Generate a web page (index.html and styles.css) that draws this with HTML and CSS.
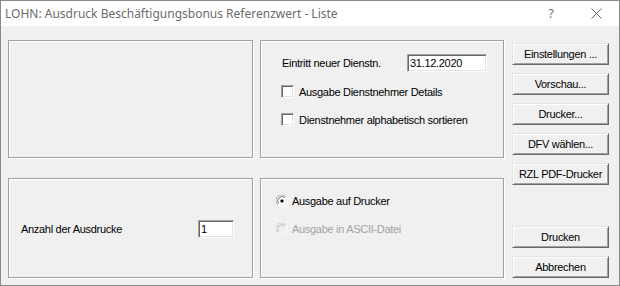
FILE: index.html
```html
<!DOCTYPE html>
<html lang="de">
<head>
  <meta charset="UTF-8">
  <title>LOHN: Ausdruck Beschäftigungsbonus Referenzwert - Liste</title>
  <link rel="stylesheet" href="styles.css">
</head>
<body>
  <div class="window">
    <div class="titlebar">
      <span class="title">LOHN: Ausdruck Beschäftigungsbonus Referenzwert - Liste</span>
      <span class="help">?</span>
      <span class="close">
        <svg width="11" height="11" viewBox="0 0 11 11">
          <path d="M0.5 0.5 L10.5 10.5 M10.5 0.5 L0.5 10.5" stroke="#6a6a6a" stroke-width="1" fill="none"/>
        </svg>
      </span>
    </div>

    <div class="client">
      <div class="col col-left">
        <div class="group group-top"></div>
        <div class="group group-bottom copies">
          <label for="copies">Anzahl der Ausdrucke</label>
          <input class="edit edit-copies" id="copies" type="text" value="1">
        </div>
      </div>

      <div class="col col-mid">
        <div class="group group-top options">
          <div class="field">
            <label for="date">Eintritt neuer Dienstn.</label>
            <input class="edit edit-date" id="date" type="text" value="31.12.2020">
          </div>
          <label class="check check-first">
            <span class="box"></span>
            Ausgabe Dienstnehmer Details
          </label>
          <label class="check">
            <span class="box"></span>
            Dienstnehmer alphabetisch sortieren
          </label>
        </div>

        <div class="group group-bottom output">
          <label class="radio">
            <svg width="12" height="12" viewBox="0 0 12 12">
              <circle cx="6" cy="6" r="5.5" fill="#fff"/>
              <path d="M1.5 9.5 A5.5 5.5 0 0 1 9.5 1.5" stroke="#a0a0a0" fill="none"/>
              <path d="M2.5 8.5 A4.3 4.3 0 0 1 8.5 2.5" stroke="#696969" fill="none"/>
              <path d="M10.5 2.5 A5.5 5.5 0 0 1 2.5 10.5" stroke="#fff" fill="none"/>
              <path d="M9.5 3.5 A4.3 4.3 0 0 1 3.5 9.5" stroke="#e3e3e3" fill="none"/>
              <rect x="4.5" y="4.5" width="3" height="3" rx="1" fill="#000"/>
            </svg>
            Ausgabe auf Drucker
          </label>
          <label class="radio radio-disabled">
            <svg width="12" height="12" viewBox="0 0 12 12">
              <circle cx="6" cy="6" r="5.5" fill="#f0f0f0"/>
              <path d="M1.5 9.5 A5.5 5.5 0 0 1 9.5 1.5" stroke="#c8c8c8" fill="none"/>
              <path d="M2.5 8.5 A4.3 4.3 0 0 1 8.5 2.5" stroke="#b4b4b4" fill="none"/>
              <path d="M10.5 2.5 A5.5 5.5 0 0 1 2.5 10.5" stroke="#fff" fill="none"/>
            </svg>
            Ausgabe in ASCII-Datei
          </label>
        </div>
      </div>

      <div class="col col-buttons">
        <button class="btn">Einstellungen ...</button>
        <button class="btn">Vorschau...</button>
        <button class="btn">Drucker...</button>
        <button class="btn">DFV wählen...</button>
        <button class="btn">RZL PDF-Drucker</button>
        <div class="actions">
          <button class="btn">Drucken</button>
          <button class="btn">Abbrechen</button>
        </div>
      </div>
    </div>
  </div>
</body>
</html>
```

FILE: styles.css
```css
* {
  box-sizing: border-box;
}

body {
  margin: 0;
  font-family: "Liberation Sans", Arial, sans-serif;
  font-size: 11px;
  letter-spacing: -0.3px;
  color: #000;
}

.window {
  width: 620px;
  height: 286px;
  border: 1px solid #8a8a8a;
  background: #f0f0f0;
  display: flex;
  flex-direction: column;
}

/* title bar */
.titlebar {
  height: 25px;
  background: #fff;
  display: flex;
  align-items: center;
  padding-left: 4px;
  color: #6b6b6b;
  font-family: "Noto Sans", "Open Sans", sans-serif;
  font-size: 12px;
  letter-spacing: 0;
}

.title {
  flex: 1;
}

.help {
  width: 12px;
  text-align: center;
  margin-right: 34px;
}

.close {
  display: flex;
  margin-right: 17px;
}

/* client area */
.client {
  flex: 1;
  display: flex;
  padding: 14px 0 7px 7px;
}

.col {
  display: flex;
  flex-direction: column;
}

.col-left {
  width: 245px;
  margin-right: 7px;
}

.col-mid {
  width: 244px;
  margin-right: 8px;
}

.col-buttons {
  width: 97px;
  padding-top: 3px;
  gap: 8px;
}

/* etched group boxes */
.group {
  border: 1px solid #a0a0a0;
  box-shadow: inset 1px 1px #fff, 1px 1px #fff;
}

.group-top {
  height: 118px;
}

.group-bottom {
  height: 100px;
  margin-top: 20px;
}

/* sunken edit fields */
.edit {
  height: 18px;
  margin: 0;
  padding: 0 0 0 2px;
  border: 1px solid;
  border-color: #a0a0a0 #fff #fff #a0a0a0;
  box-shadow: inset 1px 1px #696969, inset -1px -1px #e3e3e3;
  background: #fff;
  font: inherit;
  letter-spacing: inherit;
  color: #000;
  outline: none;
}

.edit-date {
  width: 80px;
}

.edit-copies {
  width: 36px;
}

.copies {
  display: flex;
  align-items: center;
  padding-left: 12px;
  padding-top: 2px;
}

.copies label {
  width: 177px;
}

.options {
  padding: 13px 0 0 21px;
}

.field {
  display: flex;
  align-items: center;
  height: 18px;
}

.field label {
  width: 125px;
}

.check {
  display: flex;
  align-items: center;
  height: 13px;
  margin-top: 15px;
  margin-left: -1px;
  gap: 5px;
}

.check-first {
  margin-top: 13px;
}

.box {
  width: 13px;
  height: 13px;
  border: 1px solid;
  border-color: #a0a0a0 #fff #fff #a0a0a0;
  box-shadow: inset 1px 1px #696969, inset -1px -1px #e3e3e3;
  background: #fff;
}

/* radio buttons */
.output {
  padding: 15px 0 0 15px;
}

.radio {
  display: flex;
  align-items: center;
  height: 13px;
  gap: 4px;
  margin-bottom: 15px;
}

.radio-disabled {
  color: #a3a3a3;
}

/* push buttons */
.btn {
  height: 22px;
  width: 97px;
  margin: 0;
  padding: 0;
  border: 1px solid;
  border-color: #e3e3e3 #696969 #696969 #e3e3e3;
  box-shadow: inset 1px 1px #fff, inset -1px -1px #a0a0a0;
  background: #f0f0f0;
  font: inherit;
  letter-spacing: inherit;
  color: #000;
}

.actions {
  margin-top: auto;
  display: flex;
  flex-direction: column;
  gap: 8px;
}
```
